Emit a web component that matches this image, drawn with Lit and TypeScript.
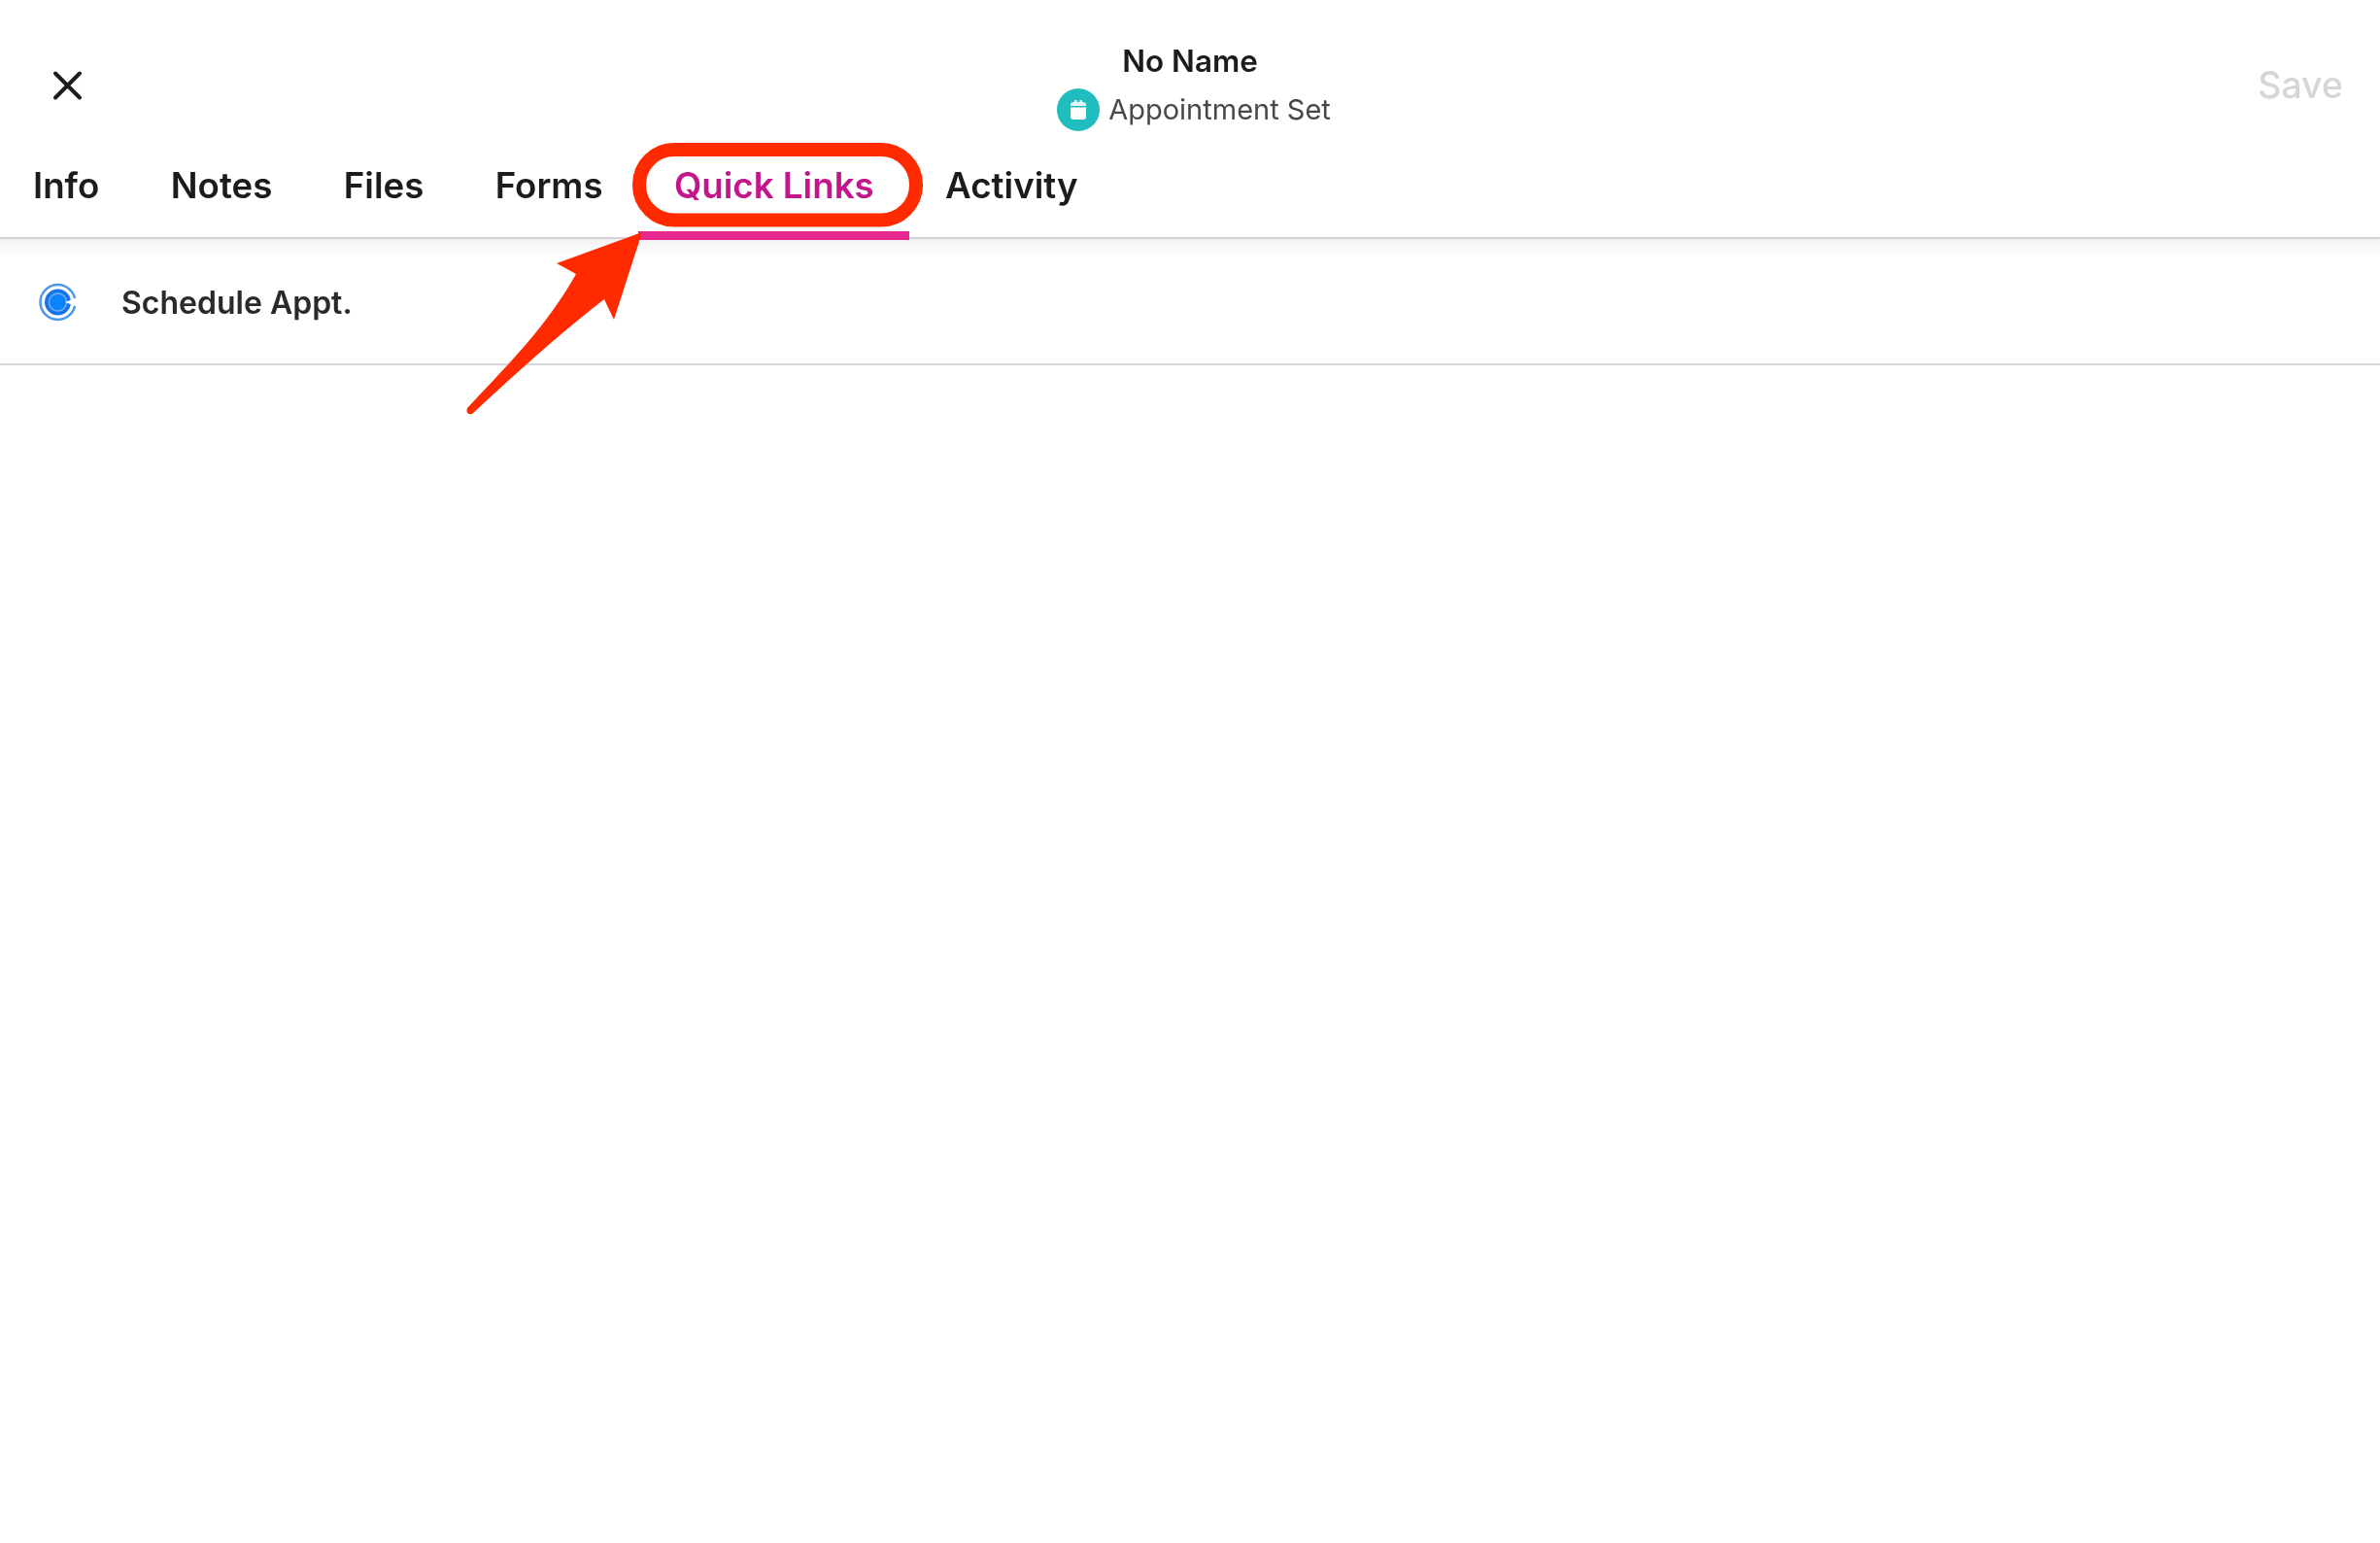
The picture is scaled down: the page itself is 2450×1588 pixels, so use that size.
import { LitElement, html, css } from "lit";
import { customElement } from "lit/decorators.js";

@customElement("app-root")
export class AppRoot extends LitElement {
  static styles = css`
    :host {
      display: block;
      position: relative;
      width: 2450px;
      height: 1588px;
      overflow: hidden;
      background: #fff;
      font-family: Inter, "Liberation Sans", sans-serif;
      color: #1c1c1e;
    }
    .page { filter: blur(0.7px); }
    .top {
      display: grid;
      grid-template-columns: 1fr auto 1fr;
      align-items: center;
      height: 146px;
      box-sizing: border-box;
      padding: 29px 38px 0;
    }
    .close { display: block; width: 40px; height: 40px; margin-left: 12px; }
    .mid { display: flex; flex-direction: column; align-items: center; gap: 9px; padding-top: 4px; }
    .name { font-size: 31.4px; font-weight: 600; line-height: 38px; color: #1c1c1e; }
    .status { display: flex; align-items: center; gap: 9px; margin-left: 8px; }
    .status svg { display: block; width: 44px; height: 44px; }
    .status span { font-size: 29px; line-height: 44px; color: #48484a; }
    .save { justify-self: end; font-size: 37.5px; font-weight: 500; color: #d6d6d6; }
    .tabs {
      display: flex;
      height: 100px;
      box-sizing: border-box;
      border-bottom: 2px solid #d6d1da;
      position: relative;
      z-index: 1;
    }
    .tab {
      padding: 23px 36.7px 0;
      font-size: 36.7px;
      line-height: 44px;
      font-weight: 600;
      color: #1c1c1e;
      box-sizing: border-box;
      height: 101px;
    }
    .tab:first-child { padding-left: 34px; }
    .tab.on { color: #c4168c; border-bottom: 9px solid #e9288f; }
    .row {
      display: flex;
      align-items: center;
      gap: 45px;
      height: 130px;
      padding: 2px 0 0 40px;
      box-sizing: border-box;
      border-bottom: 2px solid #d8d8d8;
      background: linear-gradient(#f3f2f3, #fff 18px);
    }
    .row svg { display: block; width: 40px; height: 40px; }
    .row span { font-size: 32px; font-weight: 600; color: #2a2a2c; }
    .note { position: absolute; left: 0; top: 0; width: 2450px; height: 1588px; pointer-events: none; }
  `;

  render() {
    const tabs = ["Info", "Notes", "Files", "Forms", "Quick Links", "Activity"];
    return html`
      <div class="page">
        <div class="top">
          <svg class="close" viewBox="0 0 40 40" fill="none" stroke="#1c1c1e" stroke-width="4" stroke-linecap="round">
            <path d="M7 7.500 L32 32.500 M32 7.500 L7 32.500" />
          </svg>
          <div class="mid">
            <div class="name">No Name</div>
            <div class="status">
              <svg viewBox="0 0 44 44">
                <circle cx="22" cy="22" r="22" fill="#1fbdbd" />
                <path d="M14 17 a3 3 0 0 1 3 -3 h1 v-2 h2.5 v2 h3 v-2 h2.500 v2 h1 a3 3 0 0 1 3 3 v1 h-16 z" fill="#e6f7f7" />
                <path d="M14 19.500 h16 v9.500 a3 3 0 0 1 -3 3 h-10 a3 3 0 0 1 -3 -3 z" fill="#fff" />
              </svg>
              <span>Appointment Set</span>
            </div>
          </div>
          <div class="save">Save</div>
        </div>
        <div class="tabs">
          ${tabs.map((t) => html`<div class="tab ${t === "Quick Links" ? "on" : ""}">${t}</div>`)}
        </div>
        <div class="row">
          <svg viewBox="0 0 40 40" fill="none">
            <circle cx="19.500" cy="20" r="18" stroke="#4f97ea" stroke-width="2.500" />
            <circle cx="19.500" cy="20" r="13.500" fill="#1a73e8" />
            <circle cx="19.500" cy="20" r="9" stroke="#58aeff" stroke-width="1.800" />
            <circle cx="19.500" cy="20" r="7" fill="#0a84ff" />
            <path d="M27 20 L40 15 V25 Z" fill="#fff" />
          </svg>
          <span>Schedule Appt.</span>
        </div>
      </div>
      <svg class="note" viewBox="0 0 2450 1588">
        <rect x="658" y="154" width="285" height="72.500" rx="36" fill="none" stroke="#ff2a00" stroke-width="14" />
        <path d="M661 239 L573 271 L593 282 C560 340 520 378 481 420 Q479 427 486 426 C530 385 580 340 622 308 L632 329 Z" fill="#ff2a00" />
      </svg>
    `;
  }
}
